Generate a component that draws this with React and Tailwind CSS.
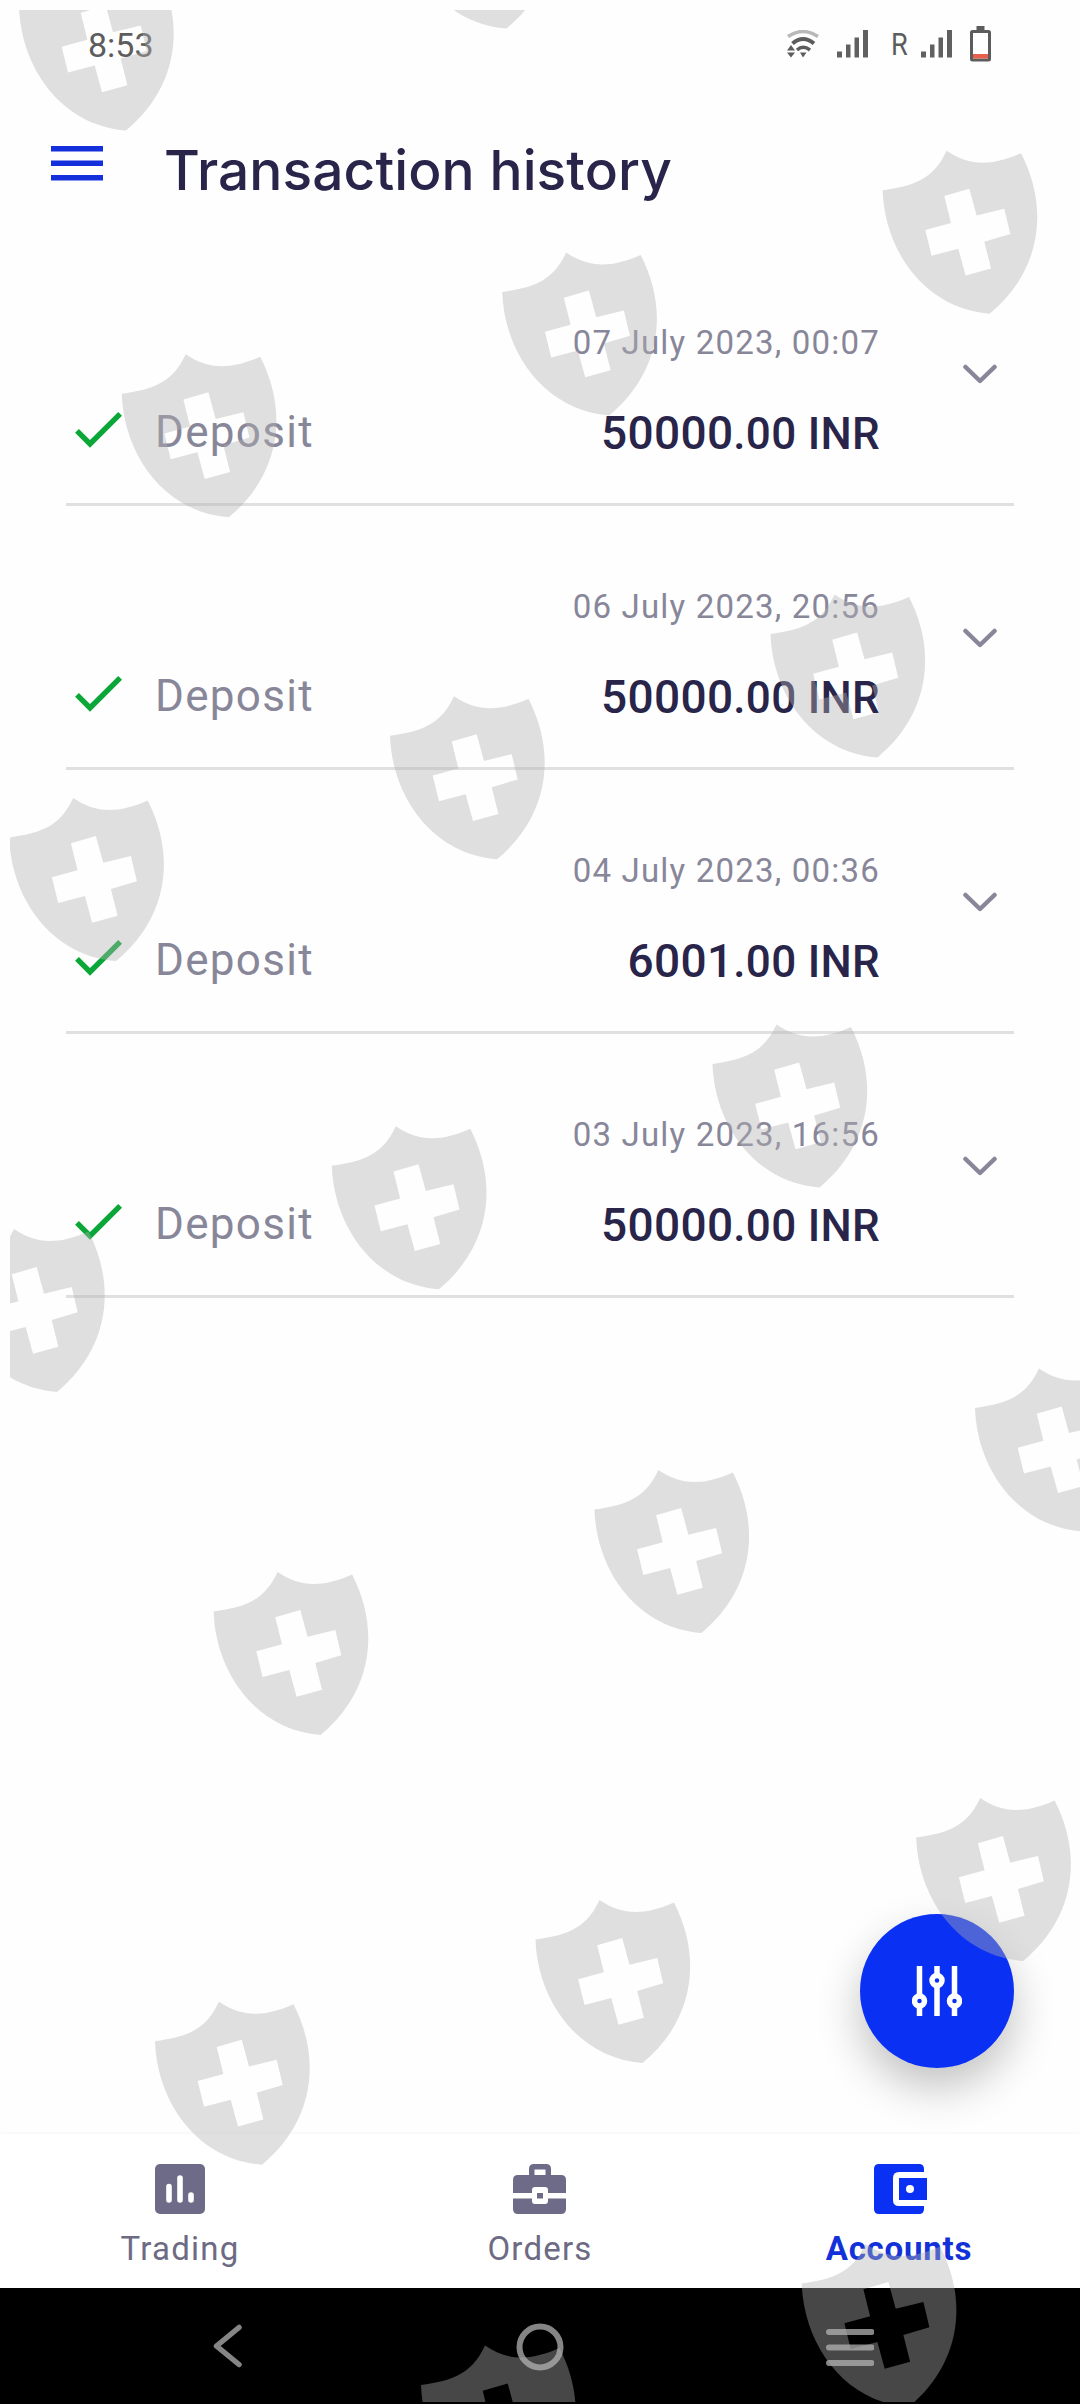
const transactions = [
  { date: "07 July 2023, 00:07", whole: "50000", cents: ".00 INR" },
  { date: "06 July 2023, 20:56", whole: "50000", cents: ".00 INR" },
  { date: "04 July 2023, 00:36", whole: "6001", cents: ".00 INR" },
  { date: "03 July 2023, 16:56", whole: "50000", cents: ".00 INR" },
];

// left/top of every shield in the overlay
const shields = [
  [19, -32.5],
  [399.5, -134.5],
  [882.6, 150.7],
  [502.2, 252.5],
  [121.7, 354.3],
  [770.5, 594.5],
  [390, 696.2],
  [9.2, 798],
  [712.5, 1024.5],
  [331.8, 1126.3],
  [-50, 1229],
  [975, 1368.4],
  [594.4, 1470],
  [213.6, 1572],
  [916.2, 1798],
  [535.5, 1900],
  [155, 2001.7],
  [801.7, 2244],
  [421, 2345.5],
];

function ShieldOverlay() {
  return (
    <svg
      className="pointer-events-none absolute inset-0"
      width="1080"
      height="2404"
      viewBox="0 0 1080 2404"
    >
      <defs>
        <clipPath id="area">
          <rect x="10" y="10" width="1070" height="2392" />
        </clipPath>
        <path
          id="shield"
          fillRule="evenodd"
          d="M0 39.5C30 35 50 30 64 0C86 15 108 16 138.5 2.5C168 60 157 122 107 163C42 158 2 100 0 39.5ZM61.7 45.3L86.7 38L94 64.7L121.7 58L127.7 83.3L101.7 91L108.4 117.7L83 124.7L75.7 98L49 105L42.7 79.3L68.4 72.3Z"
        />
      </defs>
      <g clipPath="url(#area)" fill="#b1b1b1" fillOpacity="0.4">
        {shields.map(([x, y]) => (
          <use key={`${x}-${y}`} href="#shield" x={x} y={y} />
        ))}
      </g>
    </svg>
  );
}

function Signal() {
  return (
    <svg width="32" height="28" viewBox="0 0 32 28" fill="#606060">
      <rect x="0" y="21.5" width="5" height="6" />
      <rect x="9" y="14.5" width="4.5" height="13" />
      <rect x="17.5" y="7.5" width="4.5" height="20" />
      <rect x="26" y="0" width="5" height="27.5" />
    </svg>
  );
}

function StatusBar() {
  return (
    <div className="flex h-[90px] items-start justify-between pr-[88px] pl-[88px] text-[#5c5c5c]">
      <span className="mt-[25px] text-[34px] leading-[40px]">8:53</span>
      <div className="flex items-start">
        <svg className="mt-[30px]" width="32" height="29" viewBox="0 0 32 29" fill="none">
          <path d="M1 6.5Q16 -3.5 31 6.5" stroke="#b8b8b8" strokeWidth="3.5" />
          <path d="M5.5 13.5Q16 4.5 27 13.5" stroke="#5c5c5c" strokeWidth="4" />
          <path d="M10 20Q16 14.5 23 20" stroke="#5c5c5c" strokeWidth="3.5" />
          <path d="M0 20.5L4 15L8 20.5ZM0 22.5L4 27.5L8 22.5ZM13 22.5H19.5L16 27.5Z" fill="#5c5c5c" />
        </svg>
        <div className="mt-[30px] ml-[18px]">
          <Signal />
        </div>
        <span className="mt-[25px] ml-[22px] w-[17px] text-[32px] leading-[38px]">
          <span className="inline-block origin-left scale-x-[0.85]">R</span>
        </span>
        <div className="mt-[30px] ml-[13px]">
          <Signal />
        </div>
        <svg className="mt-[26px] mr-[1px] ml-[17px]" width="21" height="36" viewBox="0 0 21 36">
          <path d="M6.500 0H14.500V4H6.500Z" fill="#5c5c5c" />
          <rect x="1.500" y="5.500" width="18" height="28.500" rx="1" fill="#fff" stroke="#5c5c5c" strokeWidth="3" />
          <rect x="3" y="28" width="15" height="4.500" fill="#e8604c" />
        </svg>
      </div>
    </div>
  );
}

function Transaction({ date, whole, cents }) {
  return (
    <li className="flex h-[264px] items-start border-b-[3px] border-[#e0e0e0]">
      <svg className="mt-[155px] shrink-0" width="64" height="64" viewBox="0 0 24 24" fill="#0ba638">
        <path d="M9 16.17L4.83 12l-1.420 1.410L9 19 21 7l-1.410-1.410z" />
      </svg>
      <span className="mt-[165px] ml-[25px] text-[44px] leading-[50px] tracking-[1.3px] text-[#888699]">
        Deposit
      </span>
      <div className="ml-auto flex flex-col items-end">
        <span className="mt-[81px] text-[33px] leading-[40px] tracking-[1.2px] text-[#888699]">
          {date}
        </span>
        <span className="mt-[45px] text-[44px] leading-[50px] font-medium tracking-[0.3px] text-[#28244a]">
          <span className="text-[46px]">{whole}</span>
          {cents}
        </span>
      </div>
      <svg className="mt-[122px] mr-[17px] ml-[83px] shrink-0" width="34" height="20" viewBox="0 0 34 20" fill="none">
        <path d="M2.500 3L17 17L31.500 3" stroke="#888699" strokeWidth="4.500" strokeLinecap="round" strokeLinejoin="round" />
      </svg>
    </li>
  );
}

function BottomNav() {
  return (
    <nav className="grid h-[154px] grid-cols-3 bg-white text-[33px] leading-[40px] tracking-[1.2px] text-[#6d6b83] shadow-[0_-1px_3px_rgba(0,0,0,0.04)]">
      <div className="flex flex-col items-center pt-[30px]">
        <svg width="50" height="50" viewBox="0 0 50 50">
          <rect width="50" height="50" rx="5" fill="#6d6b87" />
          <path d="M14 22.500V36M25 14V36M36 31V36" stroke="#fff" strokeWidth="5.600" strokeLinecap="round" />
        </svg>
        <span className="mt-[15px]">Trading</span>
      </div>
      <div className="flex flex-col items-center pt-[30px]">
        <svg width="54" height="50" viewBox="0 0 54 50">
          <path
            fillRule="evenodd"
            fill="#6d6b87"
            d="M16 11V5Q16 0 21 0H33Q38 0 38 5V11H48Q53 11 53 16V29H35V26Q35 23 32 23H22Q19 23 19 26V29H0V16Q0 11 5 11ZM21.500 11H32.500V5.500H21.500ZM0 34.500H19V37Q19 40 22 40H32Q35 40 35 37V34.500H53V45Q53 50 48 50H5Q0 50 0 45ZM24 29H30V34.500H24Z"
          />
        </svg>
        <span className="mt-[15px]">Orders</span>
      </div>
      <div className="flex flex-col items-center pt-[30px] font-bold tracking-[0.8px] text-[#1231d8]">
        <svg width="53" height="50" viewBox="0 0 53 50" fill="#0a31f3">
          <path d="M5 0H45Q50 0 50 5V8H25Q19 8 19 14V36Q19 42 25 42H50V45Q50 50 45 50H5Q0 50 0 45V5Q0 0 5 0Z" />
          <path fillRule="evenodd" d="M25 14H53V36H25ZM36 21A4 4 0 1 0 36 29A4 4 0 1 0 36 21Z" />
        </svg>
        <span className="mt-[15px] pr-[2px]">Accounts</span>
      </div>
    </nav>
  );
}

function SystemNav() {
  return (
    <div className="flex h-[116px] items-start bg-black pl-[212px]">
      <svg className="mt-[36px]" width="30" height="44" viewBox="0 0 30 44" fill="none">
        <path d="M27 3.500L4.500 22L27 40.500" stroke="#858585" strokeWidth="5.500" strokeLinecap="round" strokeLinejoin="round" />
      </svg>
      <svg className="mt-[35px] ml-[274px]" width="48" height="48" viewBox="0 0 48 48" fill="none">
        <circle cx="24" cy="24" r="20.500" stroke="#858585" strokeWidth="6" />
      </svg>
      <svg className="mt-[40px] ml-[261px]" width="49" height="38" viewBox="0 0 49 38" fill="none">
        <path d="M4 4H46.500M4 19.500H46.500M4 35H46.500" stroke="#858585" strokeWidth="6" strokeLinecap="round" />
      </svg>
    </div>
  );
}

export default function App() {
  return (
    <div className="relative flex h-[2404px] w-[1080px] flex-col overflow-hidden bg-[#fefefe] font-['Roboto',sans-serif]">
      <StatusBar />

      <header className="flex h-[152px] items-start pl-[51px]">
        <svg className="mt-[56px]" width="52" height="35" viewBox="0 0 52 35" fill="#1430dc">
          <path d="M0 0H52V5.500H0ZM0 14.500H52V20H0ZM0 29H52V34.500H0Z" />
        </svg>
        <h1 className="mt-[45px] ml-[61px] font-['Inter',sans-serif] text-[55px] leading-[70px] font-medium tracking-[0.1px] text-[#28244a]">
          Transaction history
        </h1>
      </header>

      <ul className="mx-[66px]">
        {transactions.map((item) => (
          <Transaction key={item.date} {...item} />
        ))}
      </ul>

      {/* Filter button */}
      <button className="mt-auto mr-[66px] mb-[66px] flex h-[154px] w-[154px] shrink-0 items-center justify-center self-end rounded-full bg-[#0a31f3] shadow-[0_20px_44px_rgba(0,0,0,0.24)]">
        <svg width="50" height="50" viewBox="0 0 50 50" fill="none" stroke="#fff" strokeWidth="5.500">
          <path d="M7.500 0V30M7.500 40V50M25 0V9M25 19V50M42.500 0V30M42.500 40V50" />
          <circle cx="7.500" cy="35" r="5" />
          <circle cx="25" cy="14.500" r="5" />
          <circle cx="42.500" cy="35" r="5" />
        </svg>
      </button>

      <BottomNav />
      <SystemNav />
      <ShieldOverlay />
    </div>
  );
}
